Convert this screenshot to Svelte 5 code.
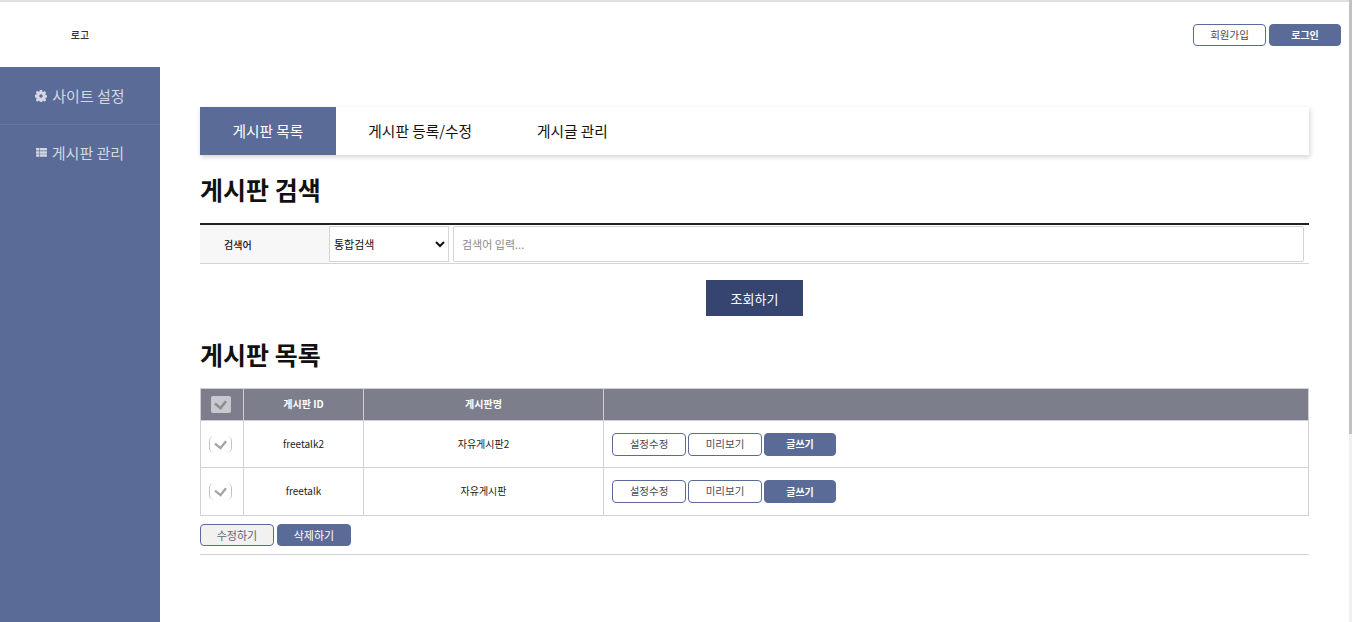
<script>
  const tabs = ['게시판 목록', '게시판 등록/수정', '게시글 관리'];
  const boards = [
    { id: 'freetalk2', name: '자유게시판2' },
    { id: 'freetalk', name: '자유게시판' }
  ];
</script>

<div class="page">
  <div class="content">
    <header class="top">
      <div class="logo">로고</div>
      <div class="auth">
        <button class="btn line">회원가입</button>
        <button class="btn fill bold short">로그인</button>
      </div>
    </header>
    <div class="body">
      <nav class="side">
        <a class="side-item first">
          <svg viewBox="0 0 14 14" width="12" height="12"><path fill="currentColor" fill-rule="evenodd" d="M5.700 0h2.600l.3 1.900 1 .4 1.600-1.100 1.900 1.900-1.100 1.600.4 1 2 .4v2.600l-2 .3-.4 1 1.100 1.700-1.900 1.900-1.600-1.100-1 .4-.3 2H5.700l-.3-2-1-.4-1.600 1.100-1.900-1.900 1.100-1.700-.4-1-2-.3V5.700l2-.4.4-1-1.100-1.600 1.900-1.900 1.600 1.100 1-.4zM7 5a2 2 0 1 0 0 4 2 2 0 0 0 0-4z"/></svg>
          사이트 설정
        </a>
        <a class="side-item">
          <svg viewBox="0 0 12 10" width="11" height="9"><path fill="currentColor" d="M0 0h3.400v2.800H0zM4 0h8v2.800H4zM0 3.500h3.400v2.800H0zM4 3.500h8v2.800H4zM0 7h3.400v2.800H0zM4 7h8v2.800H4z"/></svg>
          게시판 관리
        </a>
      </nav>
      <main class="main">
        <div class="tabs">
          {#each tabs as t, i}
            <div class="tab" class:active={i === 0}>{t}</div>
          {/each}
        </div>

        <h2 class="title">게시판 검색</h2>
        <div class="search">
          <div class="search-label">검색어</div>
          <div class="search-fields">
            <select class="sel"><option>통합검색</option></select>
            <input class="inp" placeholder="검색어 입력..." />
          </div>
        </div>
        <div class="center"><button class="query">조회하기</button></div>

        <h2 class="title second">게시판 목록</h2>
        <table class="list">
          <colgroup>
            <col style="width:43px" /><col style="width:120px" /><col style="width:240px" /><col />
          </colgroup>
          <thead>
            <tr>
              <th class="check-cell">
                <span class="head-check">
                  <svg viewBox="0 0 16 12" width="15" height="11"><path d="M2 5l6 5 6-7.500" fill="none" stroke="#8e8e8e" stroke-width="2.800"/></svg>
                </span>
              </th>
              <th><span class="cell-text">게시판 ID</span></th>
              <th><span class="cell-text">게시판명</span></th>
              <th></th>
            </tr>
          </thead>
          <tbody>
            {#each boards as b}
              <tr>
                <td class="check-cell">
                  <span class="row-check">
                    <svg viewBox="0 0 16 12" width="15" height="11"><path d="M2 5l6 5 6-7.500" fill="none" stroke="#a5a5a5" stroke-width="2.600"/></svg>
                  </span>
                </td>
                <td><span class="cell-text">{b.id}</span></td>
                <td><span class="cell-text">{b.name}</span></td>
                <td class="actions">
                  <div class="action-row">
                    <button class="btn line">설정수정</button>
                    <button class="btn line">미리보기</button>
                    <button class="btn fill bold short">글쓰기</button>
                  </div>
                </td>
              </tr>
            {/each}
          </tbody>
        </table>
        <div class="bottom">
          <button class="btn wide ghost">수정하기</button>
          <button class="btn wide fill">삭제하기</button>
        </div>
      </main>
    </div>
  </div>
  <div class="scrollbar"><div class="thumb"></div></div>
</div>

<style>
  :global(body) {
    margin: 0;
    overflow: hidden;
    background: #fff;
  }
  .page {
    display: flex;
    height: 622px;
    width: 1352px;
    overflow: hidden;
    font-family: "Noto Sans CJK KR", "Noto Sans", sans-serif;
    color: #111;
  }
  .content {
    flex: 1;
    min-width: 0;
    display: flex;
    flex-direction: column;
    border-top: 2px solid #dfdfdf;
  }
  .scrollbar {
    width: 3px;
    background: #f1f1f1;
    flex: none;
  }
  .thumb {
    height: 434px;
    background: #c1c1c1;
  }
  .top {
    height: 65px;
    flex: none;
    display: flex;
    justify-content: space-between;
    align-items: flex-start;
  }
  .logo {
    width: 160px;
    text-align: center;
    font-size: 10px;
    line-height: 14px;
    padding-top: 26px;
    color: #000;
  }
  .auth {
    display: flex;
    gap: 3px;
    padding: 22px 8px 0 0;
  }
  .btn {
    box-sizing: border-box;
    width: 74px;
    height: 23px;
    padding: 0;
    border-radius: 4px;
    border: 1px solid #5a6b97;
    font: inherit;
    font-size: 10.500px;
    line-height: 1;
  }
  .auth .btn {
    height: 22px;
    width: 73px;
  }
  .auth .short {
    width: 72px;
  }
  .short {
    width: 72px;
  }
  .line {
    background: #fff;
    color: #4a4a55;
  }
  .fill {
    background: #5a6b97;
    color: #fff;
  }
  .bold {
    font-weight: 700;
    font-size: 10px;
  }
  .wide {
    width: 74px;
    height: 22px;
    font-size: 11px;
  }
  .ghost {
    background: #f1f1f1;
    color: #5f6470;
  }
  .body {
    flex: 1;
    display: flex;
    min-height: 0;
  }
  .side {
    width: 160px;
    flex: none;
    background: #5a6b97;
    color: #d5d8e2;
  }
  .side-item {
    display: flex;
    align-items: center;
    justify-content: center;
    gap: 5px;
    height: 54px;
    font-size: 15px;
    box-sizing: border-box;
  }
  .side-item.first {
    height: 58px;
    border-bottom: 1px solid #66769f;
  }
  .main {
    flex: 1;
    min-width: 0;
    padding: 40px 40px 0;
  }
  .tabs {
    display: flex;
    height: 48px;
    background: #fff;
    box-shadow: 1px 2px 5px rgba(0, 0, 0, 0.18);
  }
  .tab {
    display: flex;
    align-items: center;
    justify-content: center;
    box-sizing: border-box;
    padding: 0 32.500px 2px;
    font-size: 14.700px;
    color: #111;
  }
  .tab.active {
    background: #5a6b97;
    color: #fff;
  }
  .title {
    margin: 0;
    padding-top: 16px;
    font-size: 25px;
    line-height: 36px;
    font-weight: 700;
    color: #111;
  }
  .title.second {
    padding-top: 20px;
  }
  .search {
    margin-top: 16px;
    display: flex;
    height: 41px;
    box-sizing: border-box;
    border-top: 2px solid #222;
    border-bottom: 1px solid #d5d5d5;
  }
  .search-label {
    width: 129px;
    flex: none;
    box-sizing: border-box;
    padding-left: 24px;
    background: #f7f7f7;
    font-size: 10px;
    font-weight: 500;
    display: flex;
    align-items: center;
  }
  .search-fields {
    flex: 1;
    display: flex;
    gap: 4px;
    padding: 1px 5px 1px 0;
  }
  .sel {
    width: 120px;
    box-sizing: border-box;
    height: 36px;
    border: 1px solid #d5d5d5;
    background: #fff;
    font: inherit;
    font-size: 11px;
    color: #111;
    padding: 0;
  }
  .inp {
    flex: 1;
    min-width: 0;
    box-sizing: border-box;
    height: 36px;
    border: 1px solid #d5d5d5;
    border-radius: 2px;
    padding: 0 8px;
    font: inherit;
    font-size: 11px;
  }
  .inp::placeholder {
    color: #8a8a8a;
  }
  .center {
    display: flex;
    justify-content: center;
    margin-top: 16px;
  }
  .query {
    width: 97px;
    height: 36px;
    border: 0;
    background: #35456f;
    color: #fff;
    font: inherit;
    font-size: 13px;
  }
  .list {
    margin-top: 16px;
    width: 100%;
    border-collapse: collapse;
    table-layout: fixed;
    border: 1px solid #d0d0d0;
    font-size: 10px;
    color: #222;
  }
  .list th {
    height: 31px;
    background: #7d7e8c;
    color: #fff;
    font-weight: 700;
    padding: 0;
    border: 1px solid #d0d0d0;
  }
  .list td {
    height: 46px;
    padding: 0;
    text-align: center;
    border: 1px solid #d0d0d0;
  }
  .list tbody tr:last-child td {
    height: 47px;
  }
  .list .check-cell {
    padding-right: 3px;
  }
  .list td.actions {
    text-align: left;
    padding-left: 8px;
  }
  .cell-text {
    display: block;
    margin-top: -2px;
  }
  .action-row {
    display: flex;
    gap: 2px;
  }
  .head-check {
    display: inline-flex;
    align-items: center;
    justify-content: center;
    width: 20px;
    height: 17px;
    background: #c8c9ce;
    border-radius: 2px;
    vertical-align: middle;
  }
  .row-check {
    display: inline-flex;
    align-items: center;
    justify-content: center;
    width: 23px;
    height: 17px;
    box-sizing: border-box;
    border-left: 1px solid #c4c4c4;
    border-right: 1px solid #c4c4c4;
    border-radius: 5px;
    vertical-align: middle;
  }
  .bottom {
    display: flex;
    gap: 3px;
    margin-top: 8px;
    padding-bottom: 8px;
    border-bottom: 1px solid #d5d5d5;
  }
</style>
